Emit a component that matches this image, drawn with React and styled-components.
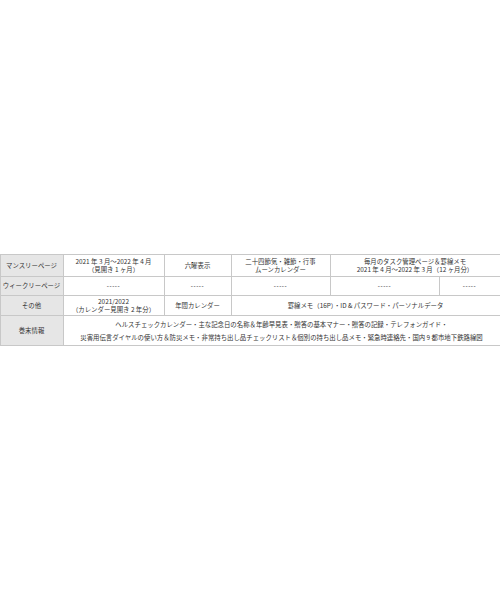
import React from 'react';
import styled, { createGlobalStyle } from 'styled-components';

const GlobalStyle = createGlobalStyle`
  html, body {
    margin: 0;
    padding: 0;
    background: #ffffff;
  }
`;

const Page = styled.div`
  width: 500px;
  height: 600px;
  display: flex;
  align-items: center;
  justify-content: center;
  overflow: hidden;
`;

const Table = styled.table`
  width: 500px;
  border-collapse: collapse;
  table-layout: fixed;
  font-family: "Noto Sans CJK JP", "Noto Sans", sans-serif;
  font-size: 6.4px;
  color: #333333;
`;

const Row = styled.tr`
  height: ${(p) => p.$h}px;
`;

const Head = styled.th`
  background: #e6e6e6;
  font-weight: normal;
  border: 1px solid #c8c8c8;
  text-align: center;
  line-height: 8px;
  padding: 0;
  white-space: nowrap;
`;

const Cell = styled.td`
  border: 1px solid #c8c8c8;
  text-align: center;
  vertical-align: middle;
  line-height: ${(p) => p.$lh || 8}px;
  padding: 0 2px;
  white-space: nowrap;
`;

const Dash = styled.span`
  font-family: "Liberation Sans", sans-serif;
  letter-spacing: 0.6px;
  color: #555555;
`;

const widths = [63, 101, 67, 99, 109, 61];

const App = () => (
  <Page>
    <GlobalStyle />
    <Table>
      <colgroup>
        {widths.map((w, i) => (
          <col key={i} style={{ width: w }} />
        ))}
      </colgroup>
      <tbody>
        <Row $h={22}>
          <Head>マンスリーページ</Head>
          <Cell>
            2021 年 3 月～2022 年 4 月<br />（見開き 1 ヶ月）
          </Cell>
          <Cell>六曜表示</Cell>
          <Cell>
            二十四節気・雑節・行事<br />ムーンカレンダー
          </Cell>
          <Cell colSpan={2}>
            毎月のタスク管理ページ＆罫線メモ<br />2021 年 4 月～2022 年 3 月（12 ヶ月分）
          </Cell>
        </Row>
        <Row $h={19}>
          <Head>ウィークリーページ</Head>
          {[0, 1, 2, 3, 4].map((i) => (
            <Cell key={i}>
              <Dash>-----</Dash>
            </Cell>
          ))}
        </Row>
        <Row $h={20}>
          <Head>その他</Head>
          <Cell>
            2021/2022<br />（カレンダー見開き 2 年分）
          </Cell>
          <Cell>年間カレンダー</Cell>
          <Cell colSpan={3}>罫線メモ（16P）・ID &amp; パスワード・パーソナルデータ</Cell>
        </Row>
        <Row $h={30}>
          <Head>巻末情報</Head>
          <Cell colSpan={5} $lh={13}>
            ヘルスチェックカレンダー・主な記念日の名称＆年齢早見表・贈答の基本マナー・贈答の記録・テレフォンガイド・
            <br />
            災害用伝言ダイヤルの使い方＆防災メモ・非常持ち出し品チェックリスト＆個別の持ち出し品メモ・緊急時連絡先・国内 9 都市地下鉄路線図
          </Cell>
        </Row>
      </tbody>
    </Table>
  </Page>
);

export default App;
